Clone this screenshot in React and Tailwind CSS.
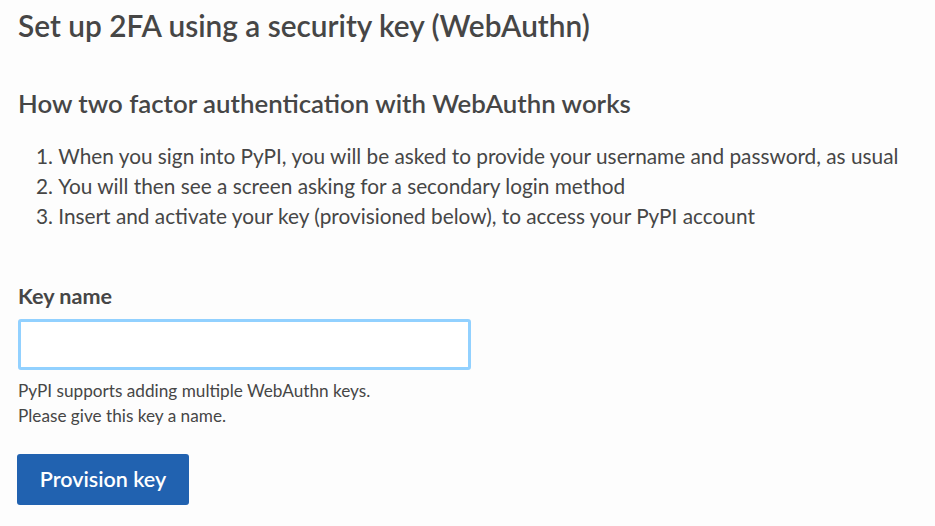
export default function App() {
  return (
    <div
      className="min-h-screen bg-[#fdfdfd] text-[#464646] px-[18px] pt-[6px]"
      style={{ fontFamily: '"Lato", "Liberation Sans", sans-serif' }}
    >
      <h1 className="text-[29.8px] font-semibold leading-[40px]">
        Set up 2FA using a security key (WebAuthn)
      </h1>

      <h2 className="mt-[42px] text-[25.8px] font-semibold leading-[30px]">
        How two factor authentication with WebAuthn works
      </h2>

      <ol className="mt-[23px] ml-[18px] list-decimal list-inside text-[20.8px] leading-[30px]">
        <li>When you sign into PyPI, you will be asked to provide your username and password, as usual</li>
        <li>You will then see a screen asking for a secondary login method</li>
        <li>Insert and activate your key (provisioned below), to access your PyPI account</li>
      </ol>

      <form className="mt-[50px]" onSubmit={(e) => e.preventDefault()}>
        <label className="block text-[21.6px] font-bold leading-[30px]">Key name</label>
        <input
          type="text"
          className="mt-[8px] block w-[453px] h-[51px] bg-white border-[3px] border-[#92d1ff] rounded-[3px] outline-none px-3"
        />
        <p className="mt-[8px] text-[17.2px] leading-[25px]">
          PyPI supports adding multiple WebAuthn keys.
          <br />
          Please give this key a name.
        </p>
        <button
          type="submit"
          className="mt-[26px] -ml-px w-[172px] h-[51px] bg-[#2162b0] text-white text-[21.5px] font-semibold rounded-[3px]"
        >
          Provision key
        </button>
      </form>
    </div>
  )
}
